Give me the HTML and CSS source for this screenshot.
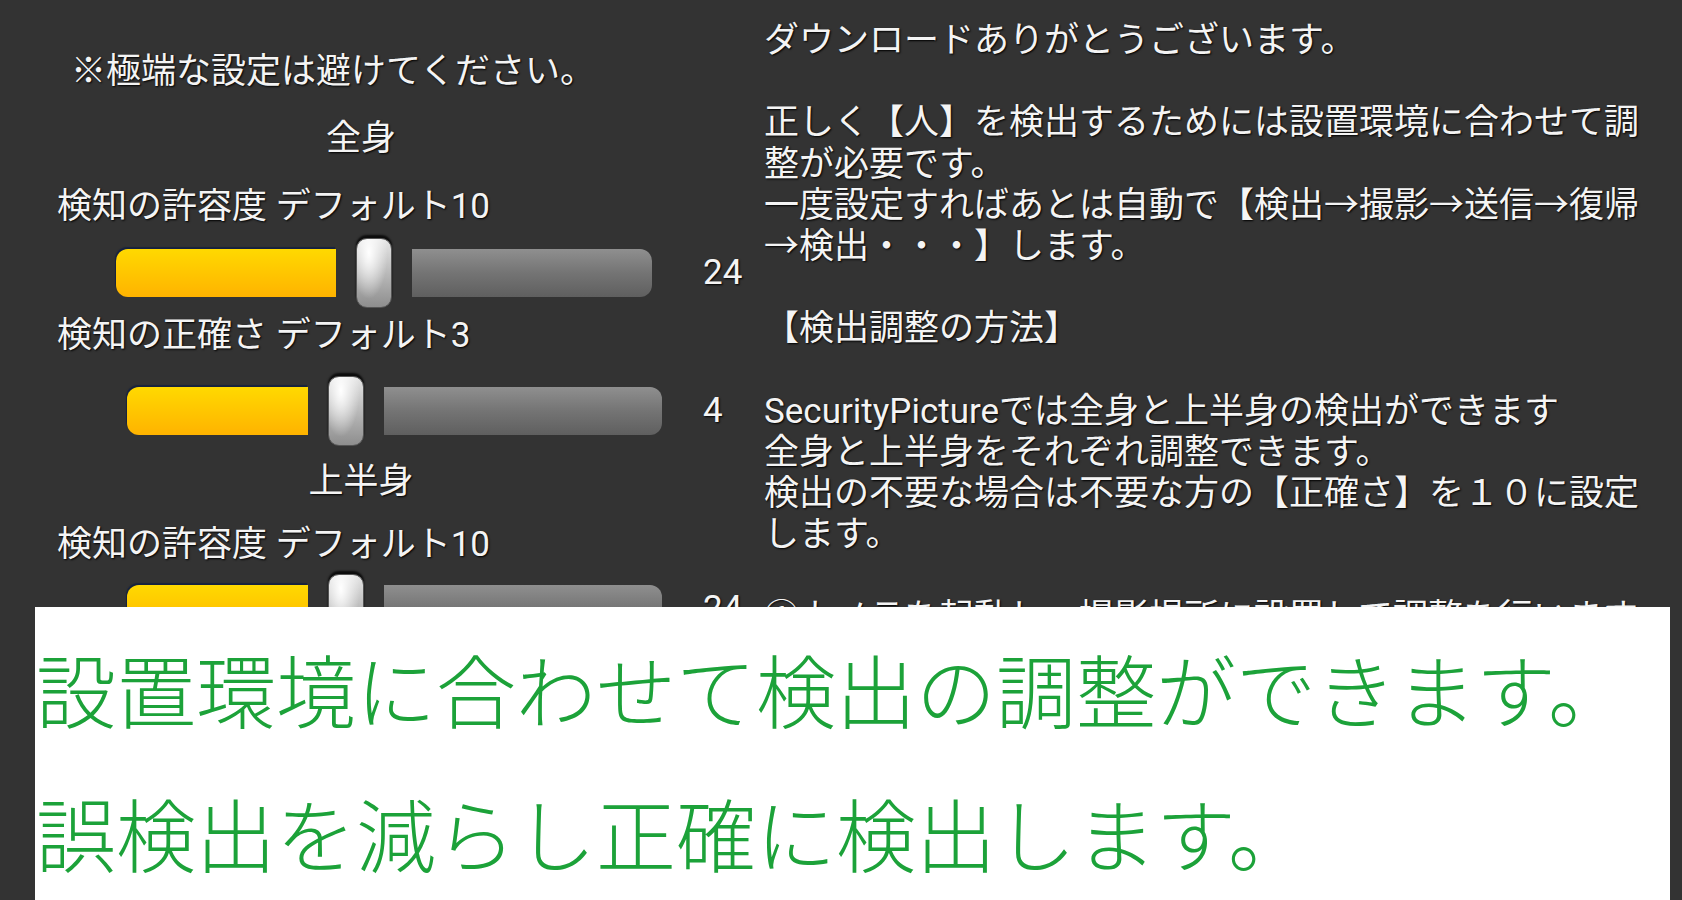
FILE: index.html
```html
<!DOCTYPE html>
<html lang="ja">

<head>
  <meta charset="UTF-8" />
  <meta name="viewport" content="width=device-width, initial-scale=1.0">
  <title>SecurityPicture - 検出調整</title>
  <link rel="stylesheet" href="styles.css">
</head>

<body>
  <div class="screen">
    <div class="settings">
      <p class="note">※極端な設定は避けてください。</p>

      <h2 class="heading">全身</h2>
      <p class="label">検知の許容度 デフォルト10</p>
      <div class="row row-first">
        <div class="seek">
          <div class="fill" style="width: 220px"></div>
          <div class="thumb"></div>
          <div class="rest"></div>
        </div>
        <span class="value">24</span>
      </div>
      <p class="label label-tight">検知の正確さ デフォルト3</p>
      <div class="row row-wide">
        <div class="seek seek-shift">
          <div class="fill" style="width: 181px"></div>
          <div class="thumb"></div>
          <div class="rest"></div>
        </div>
        <span class="value">4</span>
      </div>

      <h2 class="heading heading-second">上半身</h2>
      <p class="label label-low">検知の許容度 デフォルト10</p>
      <div class="row row-last">
        <div class="seek seek-shift">
          <div class="fill" style="width: 181px"></div>
          <div class="thumb"></div>
          <div class="rest"></div>
        </div>
        <span class="value">24</span>
      </div>
    </div>

    <div class="readme">
      <p>ダウンロードありがとうございます。</p>
      <p>正しく【人】を検出するためには設置環境に合わせて調<br>整が必要です。<br>一度設定すればあとは自動で【検出→撮影→送信→復帰<br>→検出・・・】します。</p>
      <p>【検出調整の方法】</p>
      <p>SecurityPictureでは全身と上半身の検出ができます<br>全身と上半身をそれぞれ調整できます。<br>検出の不要な場合は不要な方の【正確さ】を１０に設定<br>します。</p>
      <p>①カメラを起動し、撮影場所に設置して調整を行います。</p>
    </div>
  </div>

  <!-- caption panel laid over the screenshot -->
  <div class="caption">
    <p>設置環境に合わせて検出の調整ができます。</p>
    <p>誤検出を減らし正確に検出します。</p>
  </div>
</body>

</html>
```

FILE: styles.css
```css
/* Reset */
* {
  box-sizing: border-box;
  margin: 0;
  padding: 0;
}

body {
  width: 1682px;
  height: 900px;
  overflow: hidden;
  position: relative;
  background-color: #333333;
  color: #f4f4f4;
  font-family: Roboto, 'Noto Sans CJK JP', sans-serif;
  font-size: 35px;
  text-shadow: 1px 1px 2px #000;
}

.screen {
  display: grid;
  grid-template-columns: 762px 1fr;
}

/* Left side: seekbars */
.settings {
  padding-left: 57px;
}

.settings p,
.settings h2 {
  line-height: 42px;
  font-size: 35px;
  font-weight: 400;
  white-space: nowrap;
}

.note {
  margin-top: 51px;
  padding-left: 14px;
}

.heading {
  width: 608px;
  text-align: center;
  margin-top: 25px;
}

.heading-second {
  margin-top: 14px;
}

.label {
  margin-top: 26px;
}

.label-tight {
  margin-top: 6px;
}

.label-low {
  margin-top: 21px;
}

.row {
  display: grid;
  grid-template-columns: 646px auto;
  align-items: center;
  height: 72px;
  margin-top: 9px;
}

.row-wide {
  margin-top: 18px;
}

.row-last {
  margin-top: 7px;
}

.seek {
  display: flex;
  align-items: center;
  width: 536px;
  height: 72px;
  margin-left: 59px;
}

.seek-shift {
  margin-left: 70px;
  width: 535px;
}

.fill {
  height: 48px;
  border-radius: 12px 0 0 12px;
  background: linear-gradient(to bottom, #ffd900, #ffc400 55%, #ffb300);
  box-shadow: -1px -2px 1px #17223d;
}

.thumb {
  width: 36px;
  height: 70px;
  margin: 0 20px;
  border-radius: 11px;
  background:
    radial-gradient(ellipse at 35% 20%, #ffffff 0%, rgba(255, 255, 255, 0) 60%),
    linear-gradient(to bottom, #e6e6e6, #a8a8a8 70%, #8e8e8e);
  border: 1px solid #555;
  box-shadow: 0 -3px 2px #0c0c0c;
}

.rest {
  flex: 1;
  height: 48px;
  border-radius: 0 12px 12px 0;
  background: linear-gradient(to bottom, #8f8f8f, #747474 50%, #5f5f5f);
}

.value {
  line-height: 42px;
}

/* Right side: instructions */
.readme {
  padding-top: 20px;
  padding-left: 2px;
  white-space: nowrap;
}

.readme p {
  line-height: 41.2px;
  margin-bottom: 41.2px;
}

/* Caption overlay */
.caption {
  position: absolute;
  left: 35px;
  top: 607px;
  right: 12px;
  bottom: 0;
  background: #fff;
  padding-top: 40px;
  padding-left: 1px;
  color: #1ca239;
  font-family: 'Noto Sans CJK JP', sans-serif;
  font-size: 80px;
  font-weight: 300;
  line-height: 80px;
  text-shadow: none;
  white-space: nowrap;
}

.caption p + p {
  margin-top: 64px;
}
```
